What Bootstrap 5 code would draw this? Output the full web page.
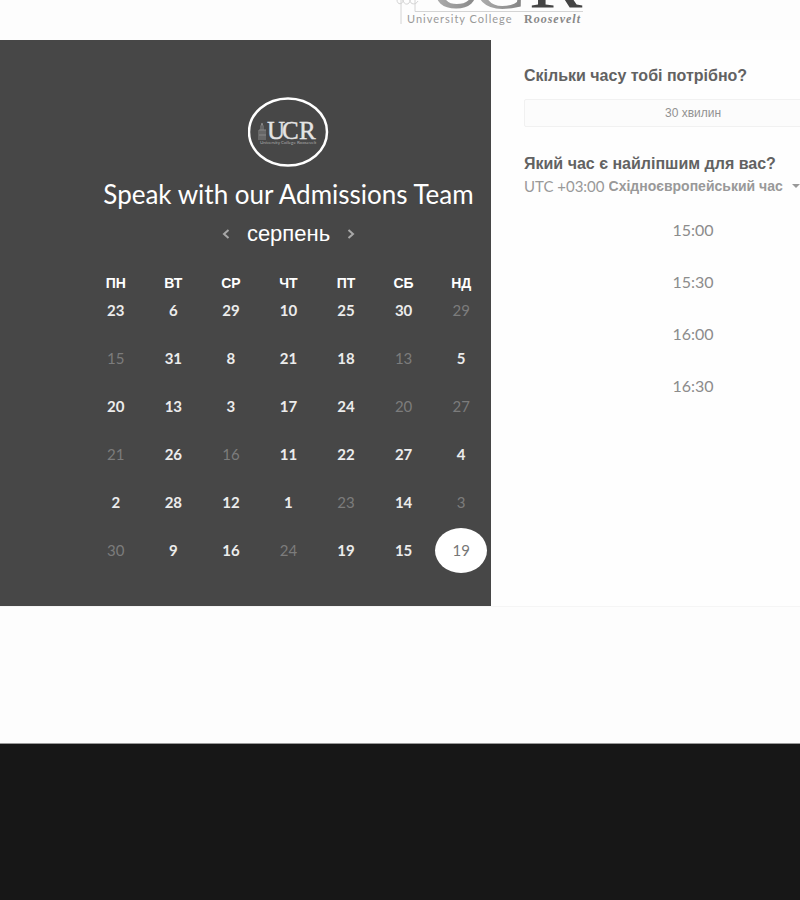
<!DOCTYPE html>
<html lang="uk">
<head>
<meta charset="utf-8">
<meta name="viewport" content="width=device-width, initial-scale=1">
<title>Speak with our Admissions Team</title>
<link href="https://cdn.jsdelivr.net/npm/bootstrap@5.3.0/dist/css/bootstrap.min.css" rel="stylesheet">
<style>
body { font-family: Lato, "Liberation Sans", sans-serif; background: #fdfdfd; overflow-x: hidden; }
.brand-bar { padding-left: 190px; }
.scheduler { border-bottom: 1px solid #f5f5f5; }
.date-panel { flex: 0 0 491px; background: #474747; padding: 57px 1px 32px 0; }
.date-inner { width: 403px; }
.team-title { font-size: 26px; line-height: 30px; margin: 11px 0 0; }
.month-row { font-family: "Liberation Sans", sans-serif; margin-top: 10px; }
.month-name { font-size: 22px; line-height: 30px; }
.arrow { line-height: 0; color: #a8a8a8; }
.calendar { table-layout: fixed; margin-top: 22px; }
.calendar th { font: 700 14px/24px "Liberation Sans", sans-serif; padding: 0; }
.calendar td { height: 48px; padding: 0; }
.calendar tbody tr:first-child td { height: 39px; vertical-align: top; }
.day { width: 52px; height: 30px; font-size: 15px; line-height: 30px; color: #ececec; font-weight: 700; }
.day:disabled { color: #7c7c7c; font-weight: 400; opacity: 1; }
.day-picked { height: 45px; border-radius: 50%; background: #fff; color: #777; font-weight: 400; }
.time-panel { padding: 24px 0 0 33px; background: #fefefe; min-width: 0; overflow: hidden; }
.time-inner { width: 338px; }
.question { font: 700 16px/24px "Liberation Sans", sans-serif; color: #626262; margin: 0; }
.duration { font-family: "Liberation Sans", sans-serif; font-size: 12px; line-height: 18px; height: 28px; margin: 11px 0 25px; color: #929292; background: #fcfcfc; border: 1px solid #f1f1f1; border-radius: 2px; }
.zone { font-size: 15px; line-height: 20px; color: #999; }
.zone select { appearance: none; font: 700 14px/20px "Liberation Sans", sans-serif; color: #999; }
.slot { font-size: 16px; line-height: 24px; height: 52px; color: #8c8c8c; }
.page-space { height: 136px; }
.page-footer { min-height: 157px; background: #171717; border-top: 1px solid #999; }
</style>
<script src="https://cdn.jsdelivr.net/npm/bootstrap@5.3.0/dist/js/bootstrap.bundle.min.js"></script>
</head>
<body>
<header class="brand-bar d-flex justify-content-center">
  <svg width="200" height="40" viewBox="395 0 200 40" role="img" aria-label="University College Roosevelt">
    <defs><linearGradient id="ink"><stop offset="0" stop-color="#b4b4b4"/><stop offset="1" stop-color="#808080"/></linearGradient></defs>
    <g font-family="Liberation Serif, serif" fill="url(#ink)" font-size="80"><text x="427" y="8">U</text><text x="472" y="8">C</text><text x="529" y="8" fill="#444">R</text></g>
    <path d="M401 0V24M415 0V11.500H583M397 0c0 5 6 5 6 0 1 6 7 5 7 0 0 5 6 5 8 1" fill="none" stroke="#d4d4d4"/>
    <text x="407" y="23" font-family="Lato, sans-serif" font-size="11" letter-spacing="1" fill="#999">University College</text>
    <text x="524" y="23" font-family="Liberation Serif, serif" font-size="12" font-weight="700" letter-spacing="1" fill="#888">R<tspan font-style="italic">oosevelt</tspan></text>
  </svg>
</header>
<main>
  <div class="scheduler d-flex">
    <section class="date-panel d-flex justify-content-end">
      <div class="date-inner text-center text-white">
        <svg width="82" height="71" viewBox="0 0 82 71" role="img" aria-label="UCR" class="d-block mx-auto">
          <ellipse cx="40" cy="35" rx="39" ry="33.500" fill="none" stroke="#fff" stroke-width="2.500"/>
          <g font-family="Liberation Serif, serif" font-size="25" fill="#e4e4e4" stroke="#e4e4e4" stroke-width=".4"><text x="19" y="42">U</text><text x="34" y="42">C</text><text x="51" y="42">R</text></g>
          <path d="M11 43V33M13 43V29l1-3 1 3V43M17 43V33M11 33h7M11 38h7" fill="none" stroke="#888"/>
          <text x="12" y="47" font-family="Lato, sans-serif" font-size="4.500" fill="#aaa">University College Roosevelt</text>
        </svg>
        <h1 class="team-title fw-normal text-nowrap">Speak with our Admissions Team</h1>
        <div class="month-row d-flex justify-content-center align-items-center gap-3">
          <button type="button" class="arrow btn p-0 border-0" aria-label="Попередній місяць"><svg width="10" height="12" viewBox="0 0 10 12"><path d="M7.500 2L3 6l4.500 4" fill="none" stroke="currentColor" stroke-width="2"/></svg></button>
          <span class="month-name">серпень</span>
          <button type="button" class="arrow btn p-0 border-0" aria-label="Наступний місяць"><svg width="10" height="12" viewBox="0 0 10 12"><path d="M2.500 2L7 6l-4.500 4" fill="none" stroke="currentColor" stroke-width="2"/></svg></button>
        </div>
        <table class="calendar w-100 align-middle">
          <thead><tr><th>ПН</th><th>ВТ</th><th>СР</th><th>ЧТ</th><th>ПТ</th><th>СБ</th><th>НД</th></tr></thead>
          <tbody id="days"></tbody>
        </table>
      </div>
    </section>
    <section class="time-panel flex-fill">
      <div class="time-inner">
        <h2 class="question">Скільки часу тобі потрібно?</h2>
        <button type="button" class="duration btn w-100 p-0 d-block">30 хвилин</button>
        <h2 class="question">Який час є найліпшим для вас?</h2>
        <div class="zone d-flex align-items-center gap-1 text-nowrap">
          <label for="zone">UTC +03:00</label>
          <select id="zone" class="border-0 bg-transparent p-0"><option>Східноєвропейський час</option></select>
          <svg class="ms-1" width="8" height="5" viewBox="0 0 8 5"><path d="M0 0h8L4 4z" fill="#999"/></svg>
        </div>
        <div class="d-grid mt-2">
          <button type="button" class="slot btn border-0">15:00</button>
          <button type="button" class="slot btn border-0">15:30</button>
          <button type="button" class="slot btn border-0">16:00</button>
          <button type="button" class="slot btn border-0">16:30</button>
        </div>
      </div>
    </section>
  </div>
  <div class="page-space"></div>
</main>
<footer class="page-footer"></footer>
<script>
const weeks = [
  "23 6 29 10 25 30 -29", "-15 31 8 21 18 -13 5", "20 13 3 17 24 -20 -27",
  "-21 26 -16 11 22 27 4", "2 28 12 1 -23 14 -3", "-30 9 16 -24 19 15 *19"
];
document.getElementById("days").innerHTML = weeks.map(w => "<tr>" + w.split(" ").map(d => {
  const off = d[0] === "-", picked = d[0] === "*";
  return `<td><button type="button" class="day btn border-0 p-0${picked ? " day-picked" : ""}"${off ? " disabled" : ""}>${d.replace(/[-*]/, "")}</button></td>`;
}).join("") + "</tr>").join("");
</script>
</body>
</html>
